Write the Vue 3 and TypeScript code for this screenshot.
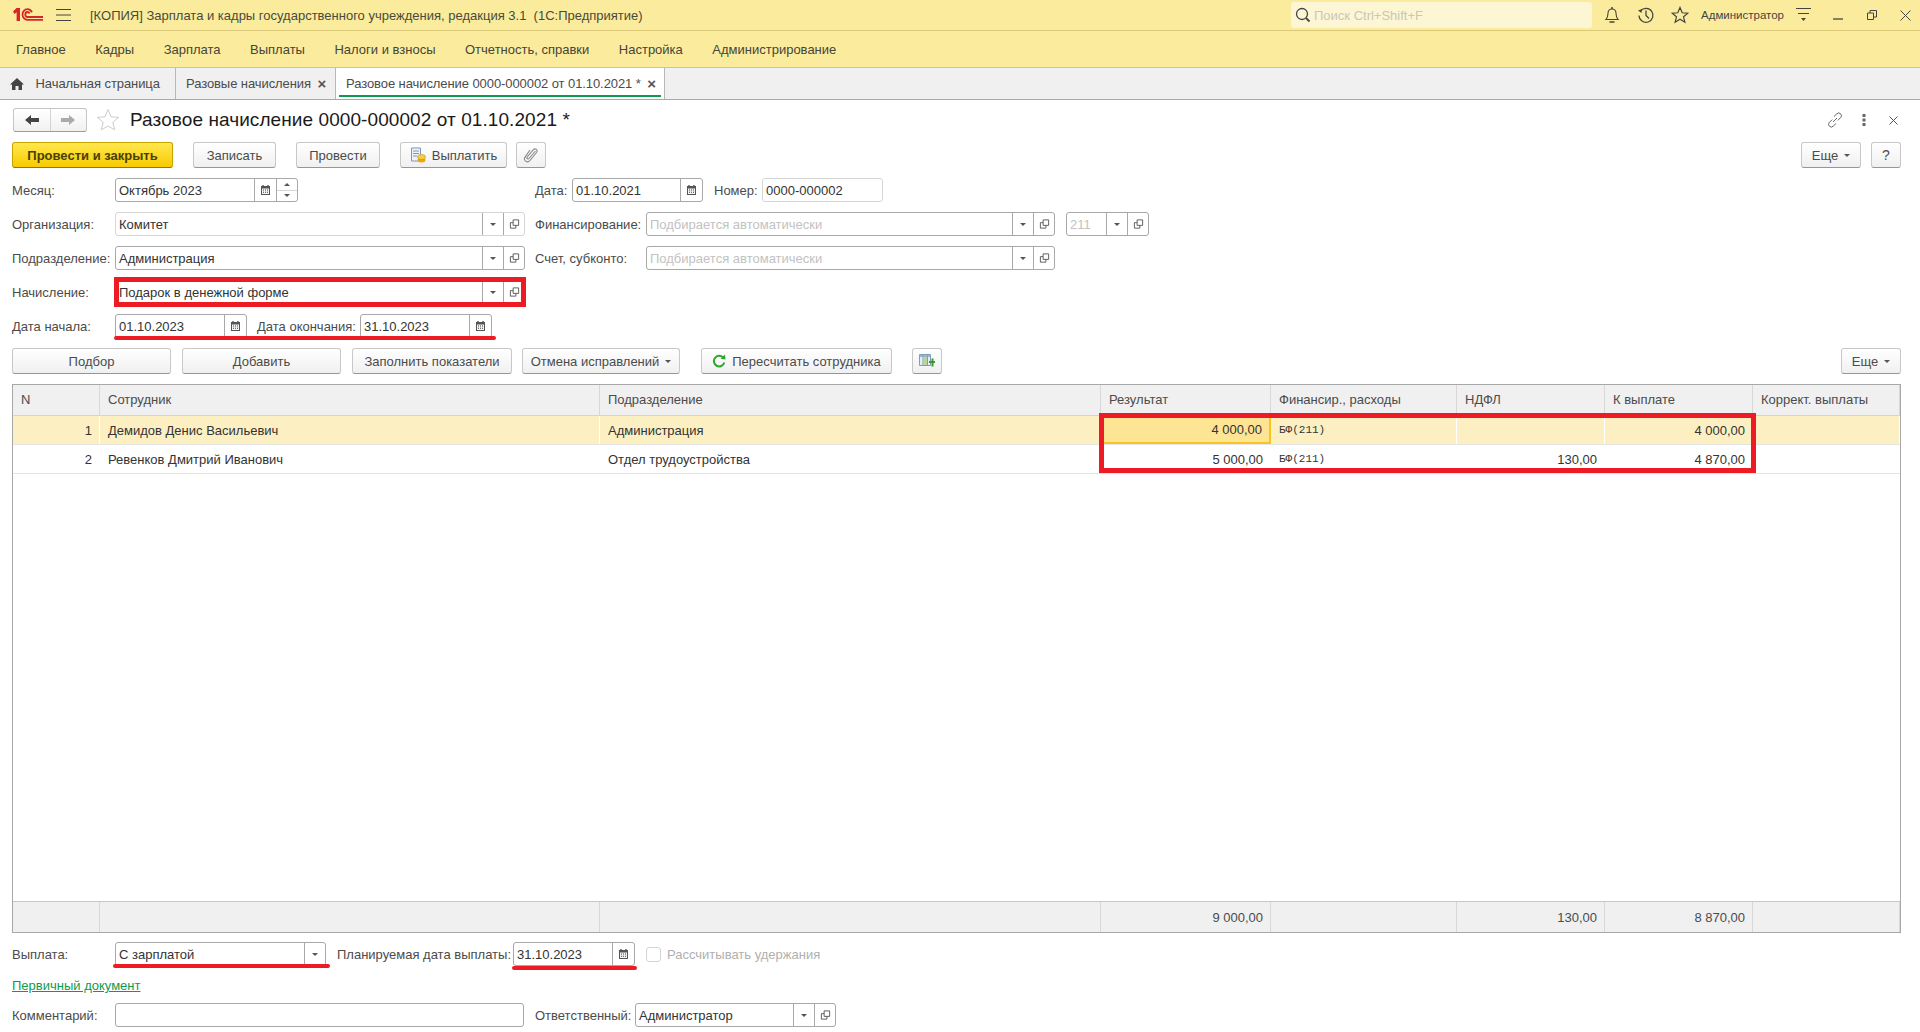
<script setup lang="ts">
const menu = [
  "Главное",
  "Кадры",
  "Зарплата",
  "Выплаты",
  "Налоги и взносы",
  "Отчетность, справки",
  "Настройка",
  "Администрирование",
];

const columns = [
  "N",
  "Сотрудник",
  "Подразделение",
  "Результат",
  "Финансир., расходы",
  "НДФЛ",
  "К выплате",
  "Коррект. выплаты",
];

const rows = [
  {
    n: 1,
    name: "Демидов Денис Васильевич",
    dept: "Администрация",
    result: "4 000,00",
    fin: "БФ(211)",
    ndfl: "",
    pay: "4 000,00",
  },
  {
    n: 2,
    name: "Ревенков Дмитрий Иванович",
    dept: "Отдел трудоустройства",
    result: "5 000,00",
    fin: "БФ(211)",
    ndfl: "130,00",
    pay: "4 870,00",
  },
];
</script>

<template>
  <div class="page">
    <svg class="defs" width="0" height="0">
      <symbol id="i-cal" viewBox="0 0 11 12">
        <path d="M1 2h9v9H1z" fill="#555" />
        <path d="M3 1v2M8 1v2" stroke="#555" stroke-width="1.4" />
        <path d="M2 4.5h7v5.5H2z" fill="#f2f2f2" />
        <path d="M3 5.5h1v1H3zM5 5.5h1v1H5zM7 5.5h1v1H7zM3 7.7h1v1H3zM5 7.7h1v1H5zM7 7.7h1v1H7z" fill="#444" />
      </symbol>
      <symbol id="i-open" viewBox="0 0 12 12">
        <path d="M4.5 1.5h6v6h-6z" fill="none" stroke="#555" />
        <path d="M4.5 4.5h-3v6h6v-3" fill="none" stroke="#555" />
      </symbol>
    </svg>

    <header class="topbar">
      <svg class="logo" viewBox="0 0 30 14" width="30" height="14">
        <path d="M0 3.5 3.5 0H7v13H3.6V4.2L1.6 6z" fill="#d9252a" />
        <path d="M19 4.2C18 2.4 16.500 1.200 14.500 1.200 11.500 1.200 9.500 3.800 9.500 6.500S11.500 11.800 14.500 11.800H30" fill="none" stroke="#d9252a" stroke-width="1.800" />
        <path d="M16.600 5.500C16.200 4.600 15.400 4 14.500 4 13.200 4 12.300 5.200 12.300 6.500S13.200 9 14.500 9H30" fill="none" stroke="#d9252a" stroke-width="1.800" />
      </svg>
      <svg class="burger" viewBox="0 0 15 12" width="15" height="12">
        <path d="M0 .5h15M0 6h15M0 11.500h15" stroke="#444" stroke-width="1" />
      </svg>
      <span class="app-title">[КОПИЯ] Зарплата и кадры государственного учреждения, редакция 3.1&nbsp;&nbsp;(1С:Предприятие)</span>
      <div class="search">
        <svg viewBox="0 0 16 16" width="16" height="16">
          <circle cx="7" cy="7" r="5.500" fill="none" stroke="#444" stroke-width="1.300" />
          <path d="m11 11 3.500 3.500" stroke="#444" stroke-width="1.800" />
        </svg>
        <span>Поиск Ctrl+Shift+F</span>
      </div>
      <svg class="sys bell" viewBox="0 0 16 18" width="16" height="18">
        <path d="M2 13.500c2-2 1.800-4 2-6.500.2-2.500 2-4 4-4s3.800 1.500 4 4c.2 2.500 0 4.500 2 6.500z" fill="none" stroke="#444" stroke-width="1.100" />
        <path d="M8 1v2M5.500 16h5" stroke="#444" stroke-width="1.500" />
      </svg>
      <svg class="sys hist" viewBox="0 0 18 18" width="18" height="18">
        <path d="M3.500 5A7 7 0 1 1 2 9.500" fill="none" stroke="#444" stroke-width="1.200" />
        <path d="M1 4.500 5 3 4.500 7z" fill="#444" />
        <path d="M9 4.500V9.500l3 3" fill="none" stroke="#444" stroke-width="1.300" />
      </svg>
      <svg class="sys fav" viewBox="0 0 18 18" width="18" height="18">
        <path d="m9 1.500 2.200 5.300 5.600.4-4.300 3.600 1.400 5.500L9 13.300l-4.900 3 1.400-5.500-4.300-3.600 5.600-.4z" fill="none" stroke="#444" stroke-width="1.200" />
      </svg>
      <span class="user">Администратор</span>
      <svg class="sys opts" viewBox="0 0 15 16" width="15" height="16">
        <path d="M0 1.500h15M2 6.500h11" stroke="#444" />
        <path d="M5 11h5l-2.500 3z" fill="#444" />
      </svg>
      <svg class="sys min" viewBox="0 0 10 10" width="10" height="10">
        <path d="M0 9h10" stroke="#444" stroke-width="1.300" />
      </svg>
      <svg class="sys rest" viewBox="0 0 10 10" width="10" height="10">
        <path d="M.5 3h6v6.500h-6zM3 3V.5h6.500v6.500H7" fill="none" stroke="#444" />
      </svg>
      <svg class="sys close" viewBox="0 0 11 11" width="11" height="11">
        <path d="m.5.5 10 10M10.500.5l-10 10" stroke="#444" />
      </svg>
    </header>

    <nav class="menu">
      <span v-for="item in menu" :key="item">{{ item }}</span>
    </nav>

    <div class="tabs">
      <div class="tab tab-home">
        <svg viewBox="0 0 14 12" width="14" height="12">
          <path d="M7 0 14 6.500h-2V12H8.500V8h-3v4H2V6.500H0z" fill="#444" />
        </svg>
        Начальная страница
      </div>
      <div class="tab tab-list">Разовые начисления <b class="tab-x">×</b></div>
      <div class="tab tab-active">Разовое начисление 0000-000002 от 01.10.2021 * <b class="tab-x">×</b></div>
    </div>

    <main class="form">
      <div class="head">
        <div class="nav-btns">
          <span class="nav-btn">
            <svg viewBox="0 0 14 12" width="14" height="12"><path d="M0 6 6 1v3h8v4H6v3z" fill="#444" /></svg>
          </span>
          <span class="nav-btn">
            <svg viewBox="0 0 14 12" width="14" height="12"><path d="M14 6 8 1v3H0v4h8v3z" fill="#aaa" /></svg>
          </span>
        </div>
        <svg class="head-star" viewBox="0 0 24 24" width="24" height="24">
          <path d="m12 1.500 3 7.300 7.600.6-5.800 4.900 1.800 7.500L12 18l-6.600 3.800 1.800-7.500L1.400 9.400 9 8.800z" fill="#fff" stroke="#ccc" />
        </svg>
        <h1>Разовое начисление 0000-000002 от 01.10.2021 *</h1>
        <div class="head-tools">
          <svg viewBox="0 0 16 16" width="16" height="16">
            <path d="M7 4.500 9.800 1.800a2.600 2.600 0 0 1 3.800 3.800L10.800 8.400M9 11.500l-2.800 2.700a2.600 2.600 0 0 1-3.800-3.800L5.200 7.600M6 10l4-4" fill="none" stroke="#666" />
          </svg>
          <svg viewBox="0 0 4 14" width="4" height="14">
            <path d="M.5 1h3v3h-3zM.5 5.500h3v3h-3zM.5 10h3v3h-3z" fill="#666" />
          </svg>
          <svg class="head-close" viewBox="0 0 9 9" width="9" height="9">
            <path d="m.5.5 8 8M8.500.5l-8 8" stroke="#555" />
          </svg>
        </div>
      </div>

      <div class="toolbar toolbar-top">
        <button class="btn btn-primary">Провести и закрыть</button>
        <button class="btn w-record">Записать</button>
        <button class="btn w-post">Провести</button>
        <button class="btn w-pay">
          <svg viewBox="0 0 16 16" width="16" height="16">
            <path d="M1.500 1h9v13h-9z" fill="#eef3fa" stroke="#7d96b5" />
            <path d="M3 4h6M3 6.500h6M3 9h4" stroke="#7d96b5" />
            <ellipse cx="11.500" cy="13" rx="4" ry="2.500" fill="#e8a912" />
            <ellipse cx="11.500" cy="10" rx="4" ry="2.500" fill="#f7cf3e" stroke="#c98d0c" stroke-width=".6" />
          </svg>
          Выплатить
        </button>
        <button class="btn w-clip">
          <svg viewBox="0 0 16 16" width="16" height="16">
            <path d="M12.500 4 6 11.500c-1 1.200-2.800-.3-1.800-1.500l6-7.200c2-2.300 5.200.2 3.300 2.700l-6.500 8c-2.800 3.200-7.300-.3-4.800-3.600L7 3" fill="none" stroke="#888" stroke-width="1.100" />
          </svg>
        </button>
        <div class="spacer"></div>
        <button class="btn w-more">Еще <i class="arrow"></i></button>
        <button class="btn w-help">?</button>
      </div>

      <div class="form-row">
        <label class="lbl">Месяц:</label>
        <div class="field w-month">
          <span class="val">Октябрь 2023</span>
          <span class="seg seg-cal"><svg class="ic"><use href="#i-cal" /></svg></span>
          <span class="seg seg-spin">
            <span class="spin-part spin-top"><i class="arrow up"></i></span>
            <span class="spin-part"><i class="arrow"></i></span>
          </span>
        </div>
        <label class="lbl lbl-date">Дата:</label>
        <div class="field w-date-top">
          <span class="val">01.10.2021</span>
          <span class="seg seg-cal"><svg class="ic"><use href="#i-cal" /></svg></span>
        </div>
        <label class="lbl lbl-num">Номер:</label>
        <div class="field field-soft w-num"><span class="val">0000-000002</span></div>
      </div>

      <div class="form-row">
        <label class="lbl">Организация:</label>
        <div class="field field-soft w-wide">
          <span class="val">Комитет</span>
          <span class="seg"><i class="arrow"></i></span>
          <span class="seg"><svg class="ic"><use href="#i-open" /></svg></span>
        </div>
        <label class="lbl lbl-right">Финансирование:</label>
        <div class="field w-fin">
          <span class="val val-hint">Подбирается автоматически</span>
          <span class="seg"><i class="arrow"></i></span>
          <span class="seg"><svg class="ic"><use href="#i-open" /></svg></span>
        </div>
        <div class="field w-code">
          <span class="val val-hint">211</span>
          <span class="seg"><i class="arrow"></i></span>
          <span class="seg"><svg class="ic"><use href="#i-open" /></svg></span>
        </div>
      </div>

      <div class="form-row">
        <label class="lbl">Подразделение:</label>
        <div class="field w-wide">
          <span class="val">Администрация</span>
          <span class="seg"><i class="arrow"></i></span>
          <span class="seg"><svg class="ic"><use href="#i-open" /></svg></span>
        </div>
        <label class="lbl lbl-right">Счет, субконто:</label>
        <div class="field w-fin">
          <span class="val val-hint">Подбирается автоматически</span>
          <span class="seg"><i class="arrow"></i></span>
          <span class="seg"><svg class="ic"><use href="#i-open" /></svg></span>
        </div>
      </div>

      <div class="form-row">
        <label class="lbl">Начисление:</label>
        <div class="field w-wide">
          <span class="val">Подарок в денежной форме</span>
          <span class="seg"><i class="arrow"></i></span>
          <span class="seg"><svg class="ic"><use href="#i-open" /></svg></span>
          <span class="red-box"></span>
        </div>
      </div>

      <div class="form-row">
        <label class="lbl">Дата начала:</label>
        <div class="dates">
          <div class="field w-start">
            <span class="val">01.10.2023</span>
            <span class="seg seg-cal"><svg class="ic"><use href="#i-cal" /></svg></span>
          </div>
          <label class="lbl lbl-end">Дата окончания:</label>
          <div class="field w-start">
            <span class="val">31.10.2023</span>
            <span class="seg seg-cal"><svg class="ic"><use href="#i-cal" /></svg></span>
          </div>
          <span class="red-line line-dates"></span>
        </div>
      </div>

      <div class="toolbar toolbar-table">
        <button class="btn w-pick">Подбор</button>
        <button class="btn w-pick">Добавить</button>
        <button class="btn w-fill">Заполнить показатели</button>
        <button class="btn w-cancel">Отмена исправлений <i class="arrow"></i></button>
        <button class="btn w-recalc">
          <svg viewBox="0 0 14 14" width="14" height="14">
            <path d="M11.500 4A5.300 5.300 0 1 0 12.300 8.500" fill="none" stroke="#2fa52f" stroke-width="2" />
            <path d="M8.500 4.800 13.500 5.500 13 .5z" fill="#2fa52f" />
          </svg>
          Пересчитать сотрудника
        </button>
        <button class="btn w-clip">
          <svg viewBox="0 0 16 16" width="16" height="16">
            <path d="M.5 1.500h11v11H.5z" fill="#e6eef4" stroke="#7f9fb8" />
            <path d="M1 2h10v2H1z" fill="#9db8cc" />
            <path d="M4 2v10" stroke="#7f9fb8" />
            <path d="M5 4h3v8H5z" fill="#b9d39a" />
            <path d="M8.500 2v10" stroke="#7f9fb8" />
            <path d="M10 8h2.500V5.500h2V8H16v2h-1.500v3.500h-2V10H10z" fill="#3a9a2e" />
          </svg>
        </button>
        <div class="spacer"></div>
        <button class="btn w-more">Еще <i class="arrow"></i></button>
      </div>

      <section class="grid">
        <div class="grid-row grid-head">
          <div v-for="col in columns" :key="col" class="cell">{{ col }}</div>
        </div>
        <div class="grid-body">
          <div
            v-for="(row, index) in rows"
            :key="row.n"
            class="grid-row grid-line"
            :class="{ selected: index === 0 }"
          >
            <div class="cell num">{{ row.n }}</div>
            <div class="cell">{{ row.name }}</div>
            <div class="cell">{{ row.dept }}</div>
            <div class="cell num" :class="{ current: index === 0 }">{{ row.result }}</div>
            <div class="cell fin">{{ row.fin }}</div>
            <div class="cell num">{{ row.ndfl }}</div>
            <div class="cell num">{{ row.pay }}</div>
            <div class="cell"></div>
          </div>
        </div>
        <div class="grid-row grid-foot">
          <div class="cell"></div>
          <div class="cell"></div>
          <div class="cell"></div>
          <div class="cell num">9 000,00</div>
          <div class="cell"></div>
          <div class="cell num">130,00</div>
          <div class="cell num">8 870,00</div>
          <div class="cell"></div>
        </div>
        <span class="red-box red-table"></span>
      </section>

      <div class="form-row row-pay">
        <label class="lbl">Выплата:</label>
        <div class="field w-payout">
          <span class="val">С зарплатой</span>
          <span class="seg"><i class="arrow"></i></span>
          <span class="red-line line-payout"></span>
        </div>
        <label class="lbl lbl-plan">Планируемая дата выплаты:</label>
        <div class="field w-plan">
          <span class="val">31.10.2023</span>
          <span class="seg seg-cal"><svg class="ic"><use href="#i-cal" /></svg></span>
          <span class="red-line line-plan"></span>
        </div>
        <span class="check"></span>
        <span class="check-lbl">Рассчитывать удержания</span>
      </div>

      <a class="doc-link">Первичный документ</a>

      <div class="form-row row-comment">
        <label class="lbl">Комментарий:</label>
        <div class="field w-comment"></div>
        <label class="lbl lbl-resp">Ответственный:</label>
        <div class="field w-resp">
          <span class="val">Администратор</span>
          <span class="seg"><i class="arrow"></i></span>
          <span class="seg"><svg class="ic"><use href="#i-open" /></svg></span>
        </div>
      </div>
    </main>
  </div>
</template>

<style>
html,
body {
  margin: 0;
  background: #fff;
}
</style>

<style scoped>
.page {
  width: 1920px;
  height: 1032px;
  overflow: hidden;
  background: #fff;
  font-family: "Liberation Sans", Arial, sans-serif;
  font-size: 13px;
  color: #4b4b4b;
}

.defs {
  position: absolute;
}

.topbar {
  height: 30px;
  background: #fbec9d;
  border-bottom: 1px solid #d8c877;
  display: flex;
  align-items: center;
  padding-left: 13px;
}

.burger {
  margin-left: 13px;
}

.app-title {
  margin-left: 19px;
  width: 1201px;
  white-space: nowrap;
  color: #4a4a3a;
}

.search {
  width: 301px;
  height: 26px;
  background: #fdf6d4;
  border-radius: 3px;
  display: flex;
  align-items: center;
  gap: 3px;
  padding-left: 4px;
  box-sizing: border-box;
  color: #c9c6b8;
}

.sys {
  flex: none;
}

.bell {
  margin-left: 12px;
}

.hist {
  margin-left: 17px;
}

.fav {
  margin-left: 16px;
}

.user {
  margin-left: 12px;
  width: 92px;
  font-size: 11.500px;
  white-space: nowrap;
  color: #444;
}

.opts {
  margin-left: 3px;
}

.min {
  margin-left: 22px;
}

.rest {
  margin-left: 24px;
}

.close {
  margin-left: 23px;
}

.menu {
  height: 36px;
  background: #fbec9d;
  border-bottom: 1px solid #d4c682;
  display: flex;
  align-items: center;
  gap: 29.500px;
  padding-left: 16px;
  color: #454538;
}

.tabs {
  height: 31px;
  background: #f0f0f0;
  border-bottom: 1px solid #a9a9a9;
  display: flex;
}

.tab {
  display: flex;
  align-items: center;
  box-sizing: border-box;
  border-right: 1px solid #b8b8b8;
  white-space: pre;
  letter-spacing: -0.080px;
  color: #4b4b4b;
}

.tab-home {
  width: 176px;
  padding-left: 10px;
  gap: 8px;
}

.tab-list {
  width: 160px;
  padding-left: 10px;
}

.tab-active {
  width: 329px;
  padding-left: 10px;
  background: #fff;
  position: relative;
}

.tab-active::after {
  content: "";
  position: absolute;
  left: 3px;
  right: 3px;
  bottom: 2px;
  height: 2px;
  background: #0f9a50;
}

.tab-x {
  margin-left: 3px;
  font-size: 15px;
  font-weight: 700;
  line-height: 1;
  color: #555;
}

.form {
  padding: 8px 19px 0 12px;
}

.head {
  height: 24px;
  display: flex;
  align-items: center;
}

.nav-btns {
  display: flex;
  width: 74px;
  height: 24px;
  margin-left: 1px;
  box-sizing: border-box;
  border: 1px solid #c6c6c6;
  border-bottom-color: #9c9c9c;
  border-radius: 3px;
  background: linear-gradient(#fff, #f1f1f1);
}

.nav-btn {
  flex: 1;
  display: flex;
  align-items: center;
  justify-content: center;
}

.nav-btn + .nav-btn {
  border-left: 1px solid #d4d4d4;
}

.head-star {
  margin-left: 9px;
}

h1 {
  margin: 0 0 0 10px;
  font-size: 19px;
  font-weight: 400;
  letter-spacing: 0.080px;
  color: #1a1a1a;
}

.head-tools {
  margin-left: auto;
  display: flex;
  align-items: center;
  gap: 19px;
  padding-right: 3px;
}

.head-close {
  margin-left: 4px;
}

.toolbar {
  display: flex;
  align-items: stretch;
}

.toolbar-top {
  margin-top: 10px;
  height: 26px;
}

.toolbar-table {
  margin-top: 10px;
  height: 26px;
  gap: 10px;
}

.spacer {
  flex: 1;
}

.btn {
  font: inherit;
  color: #4b4b4b;
  display: flex;
  align-items: center;
  justify-content: center;
  gap: 6px;
  padding: 0;
  box-sizing: border-box;
  background: linear-gradient(#fff, #f0f0f0);
  border: 1px solid #c8c8c8;
  border-bottom-color: #969696;
  border-radius: 3px;
}

.btn-primary {
  width: 161px;
  margin-right: 20px;
  background: linear-gradient(#ffe74d, #f7cb00);
  border-color: #c7a400;
  border-bottom-color: #8f7700;
  font-weight: 700;
  color: #4a3f00;
}

.w-record {
  width: 83px;
  margin-right: 20px;
}

.w-post {
  width: 84px;
  margin-right: 20px;
}

.w-pay {
  width: 107px;
  margin-right: 9px;
}

.w-clip {
  width: 30px;
}

.w-more {
  width: 60px;
}

.w-help {
  width: 30px;
  margin-left: 10px;
  font-size: 14px;
}

.arrow {
  display: inline-block;
  width: 0;
  height: 0;
  border-left: 3px solid transparent;
  border-right: 3px solid transparent;
  border-top: 3px solid #555;
}

.arrow.up {
  border-top: 0;
  border-bottom: 3px solid #555;
}

.form-row {
  display: flex;
  align-items: center;
  height: 24px;
  margin-top: 10px;
}

.lbl {
  width: 103px;
  flex: none;
  white-space: nowrap;
}

.field {
  position: relative;
  display: flex;
  flex: none;
  height: 24px;
  box-sizing: border-box;
  background: #fff;
  border: 1px solid #a8a8a8;
  border-radius: 3px;
  color: #333;
}

.field-soft {
  border-color: #d6d6d6;
}

.val {
  flex: 1;
  min-width: 0;
  padding-left: 3px;
  line-height: 23px;
  white-space: nowrap;
  overflow: hidden;
}

.val-hint {
  color: #c2c2c2;
}

.seg {
  width: 20px;
  flex: none;
  display: flex;
  align-items: center;
  justify-content: center;
  border-left: 1px solid #a8a8a8;
}

.seg-cal {
  width: 21px;
}

.seg-spin {
  flex-direction: column;
}

.spin-part {
  flex: 1;
  width: 100%;
  display: flex;
  align-items: center;
  justify-content: center;
}

.spin-top {
  border-bottom: 1px solid #d6d6d6;
}

.ic {
  width: 11px;
  height: 12px;
}

.w-month {
  width: 183px;
}

.w-date-top {
  width: 131px;
}

.lbl-date {
  width: 37px;
  margin-left: 237px;
}

.lbl-num {
  width: 48px;
  margin-left: 11px;
}

.w-num {
  width: 121px;
}

.w-wide {
  width: 410px;
}

.lbl-right {
  width: 111px;
  margin-left: 10px;
}

.w-fin {
  width: 409px;
}

.w-code {
  width: 83px;
  margin-left: 11px;
}

.dates {
  position: relative;
  display: flex;
  align-items: center;
}

.w-start {
  width: 132px;
}

.lbl-end {
  width: 103px;
  margin-left: 10px;
}

.red-box {
  position: absolute;
  top: -4px;
  bottom: -4px;
  left: -2px;
  right: -2px;
  border: 5px solid #ed1c24;
  pointer-events: none;
}

.red-line {
  position: absolute;
  height: 4px;
  background: #ed1c24;
  border-radius: 2px;
}

.line-dates {
  left: -1px;
  right: -4px;
  top: 22px;
}

.line-payout {
  left: -3px;
  right: -5px;
  top: 21px;
}

.line-plan {
  left: -2px;
  right: -3px;
  top: 23px;
}

.w-pick {
  width: 159px;
  margin-right: 1px;
}

.w-fill {
  width: 160px;
}

.w-cancel {
  width: 158px;
}

.w-recalc {
  width: 191px;
  margin-left: 11px;
  margin-right: 10px;
}

.grid {
  position: relative;
  height: 549px;
  margin-top: 10px;
  box-sizing: border-box;
  border: 1px solid #a8a8a8;
  display: flex;
  flex-direction: column;
}

.grid-row {
  display: grid;
  grid-template-columns: 87px 500px 501px 170px 186px 148px 148px 147px;
}

.cell {
  display: flex;
  align-items: center;
  padding: 0 7px 0 8px;
  box-sizing: border-box;
  white-space: nowrap;
  min-width: 0;
  border-right: 1px solid #fff;
}

.grid-head {
  height: 31px;
  background: #f0f0f0;
  border-bottom: 1px solid #d4d4d4;
  box-sizing: border-box;
}

.grid-head .cell {
  padding-bottom: 2px;
  border-right: 1px solid #d8d8d8;
}

.grid-body {
  flex: 1;
}

.grid-line {
  height: 29px;
  box-sizing: border-box;
  border-bottom: 1px solid #e4e4e4;
  color: #333;
}

.selected {
  background: #fcf0c3;
}

.num {
  justify-content: flex-end;
}

.fin {
  font-family: "Liberation Mono", monospace;
  font-size: 11px;
}

.current {
  background: #fde594;
  border: 1px solid #f6c61f;
  border-width: 0 2px 2px 0;
}

.grid-foot {
  height: 31px;
  box-sizing: border-box;
  background: #f0f0f0;
  border-top: 1px solid #c8c8c8;
}

.grid-foot .cell {
  border-right: 1px solid #d8d8d8;
}

.red-table {
  top: 28px;
  left: 1086px;
  right: auto;
  bottom: auto;
  width: 657px;
  height: 60px;
  box-sizing: border-box;
}

.row-pay {
  margin-top: 9px;
}

.w-payout {
  width: 211px;
}

.lbl-plan {
  width: 176px;
  margin-left: 11px;
}

.w-plan {
  width: 122px;
}

.check {
  width: 15px;
  height: 15px;
  margin-left: 11px;
  box-sizing: border-box;
  border: 1px solid #d4d4d4;
  border-radius: 3px;
}

.check-lbl {
  margin-left: 6px;
  color: #b0b0b0;
}

.doc-link {
  display: block;
  width: fit-content;
  margin-top: 12px;
  line-height: 16px;
  color: #0f9a50;
  text-decoration: underline;
}

.row-comment {
  margin-top: 9px;
}

.w-comment {
  width: 409px;
}

.lbl-resp {
  width: 100px;
  margin-left: 11px;
}

.w-resp {
  width: 201px;
}
</style>
